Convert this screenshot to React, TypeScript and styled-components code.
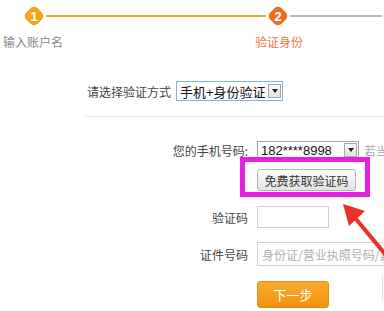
import React from 'react';
import styled, { createGlobalStyle } from 'styled-components';

const GlobalStyle = createGlobalStyle`
    html, body {
        margin: 0;
        padding: 0;
        background: #ffffff;
    }
    body {
        font-family: "Noto Sans CJK SC", "Noto Sans", sans-serif;
        font-size: 12px;
        color: #333;
    }
`;

const Page = styled.div`
    position: relative;
    width: 384px;
    height: 311px;
    overflow: hidden;
`;

// ---- step header ----

const Steps = styled.div`
    padding-top: 6px;
`;

const Track = styled.div`
    display: flex;
    align-items: center;
    padding-left: 24px;
    height: 20px;
`;

interface NodeProps {
    $color: string
}

const Node = styled.div<NodeProps>`
    position: relative;
    width: 20px;
    height: 20px;
    flex: none;
    display: flex;
    align-items: center;
    justify-content: center;
    color: #fff;
    font-family: "Liberation Sans", Arial, sans-serif;
    font-weight: bold;
    font-size: 13px;

    &::before {
        content: "";
        position: absolute;
        left: 2px;
        top: 2px;
        width: 16px;
        height: 16px;
        background: ${(props) => props.$color};
        border-radius: 5px;
        transform: rotate(45deg);
    }

    span {
        position: relative;
    }
`;

interface LineProps {
    $color: string
    $width?: number
}

const Line = styled.div<LineProps>`
    height: 2px;
    background: ${(props) => props.$color};
    margin: 0 2px;
    ${(props) => props.$width ? `width: ${props.$width}px; flex: none;` : 'flex: 1;'}
`;

const Labels = styled.div`
    display: flex;
    margin-top: 8px;
    line-height: 16px;
`;

interface StepLabelProps {
    $color: string
    $left: number
}

const StepLabel = styled.span<StepLabelProps>`
    color: ${(props) => props.$color};
    margin-left: ${(props) => props.$left}px;
    font-size: 12px;
`;

// ---- method select ----

const MethodRow = styled.div`
    display: flex;
    align-items: center;
    gap: 5px;
    margin-top: 30px;
    padding-left: 87px;
    height: 22px;
    font-size: 12px;
    color: #444;
`;

interface SelectProps {
    $border: string
    $width: number
    $height: number
}

const Select = styled.div<SelectProps>`
    display: flex;
    align-items: center;
    width: ${(props) => props.$width}px;
    height: ${(props) => props.$height}px;
    border: 1px solid ${(props) => props.$border};
    box-sizing: border-box;
    padding: 0 1px 0 3px;
    font-size: 13px;
    color: #111;
    background: #fff;
    white-space: nowrap;
`;

const SelectText = styled.span`
    flex: 1;
    font-family: "Liberation Sans", "Noto Sans CJK SC", sans-serif;
`;

const Caret = styled.span`
    width: 13px;
    height: 14px;
    box-sizing: border-box;
    border: 1px solid #a8a8a8;
    background: linear-gradient(#fafafa, #e2e2e2);
    display: flex;
    align-items: center;
    justify-content: center;

    &::after {
        content: "";
        border-left: 3px solid transparent;
        border-right: 3px solid transparent;
        border-top: 4px solid #222;
    }
`;

const Divider = styled.div`
    height: 1px;
    background: #e6e6e6;
    margin: 14px 0 0 85px;
`;

// ---- form ----

const Form = styled.div`
    display: flex;
    flex-direction: column;
`;

interface RowProps {
    $top: number
    $height: number
}

const Row = styled.div<RowProps>`
    display: grid;
    grid-template-columns: 248px auto;
    column-gap: 9px;
    align-items: center;
    margin-top: ${(props) => props.$top}px;
    height: ${(props) => props.$height}px;
`;

const Label = styled.span`
    text-align: right;
    font-size: 12px;
    color: #444;
    white-space: nowrap;
`;

const Controls = styled.div`
    display: flex;
    align-items: center;
    gap: 5px;
    white-space: nowrap;
`;

const Hint = styled.span`
    color: #aaa;
    font-size: 12px;
`;

const Anchor = styled.div`
    position: relative;
    display: inline-flex;
`;

const Highlight = styled.div`
    position: absolute;
    left: -17px;
    top: -12px;
    width: 130px;
    height: 40px;
    box-sizing: border-box;
    border: 5px solid #e61ee6;
    pointer-events: none;
`;

const GrayButton = styled.button`
    width: 99px;
    height: 22px;
    padding: 0;
    border: 1px solid #b5b5b5;
    border-radius: 3px;
    background: linear-gradient(#fdfdfd, #e3e3e3);
    font-family: "Noto Sans CJK SC", sans-serif;
    font-size: 12px;
    color: #333;
`;

interface InputProps {
    $width: number
    $height: number
}

const Input = styled.input<InputProps>`
    width: ${(props) => props.$width}px;
    height: ${(props) => props.$height}px;
    box-sizing: border-box;
    border: 1px solid #d0d0d0;
    padding: 0 4px;
    font-family: "Noto Sans CJK SC", sans-serif;
    font-size: 12px;
    outline: none;

    &::placeholder {
        color: #b0b0b0;
    }
`;

const NextButton = styled.button`
    width: 72px;
    height: 27px;
    padding: 0;
    border: 1px solid #e58f0c;
    border-radius: 3px;
    background: linear-gradient(#f8ad31, #f0920f);
    color: #fff;
    font-family: "Noto Sans CJK SC", sans-serif;
    font-size: 13px;
`;

const Arrow = styled.svg`
    position: absolute;
    left: 335px;
    top: 198px;
`;

const EdgeMark = styled.div`
    position: absolute;
    left: 382px;
    top: 276px;
    width: 1px;
    height: 24px;
    background: #ddd;
`;

const App = () => {
    return (
        <Page>
            <GlobalStyle />
            <Steps>
                <Track>
                    <Node $color="#f6a21e"><span>1</span></Node>
                    <Line $color="#f0a632" $width={220} />
                    <Node $color="#ee6b23"><span>2</span></Node>
                    <Line $color="#b8b8b8" />
                </Track>
                <Labels>
                    <StepLabel $color="#888" $left={3}>输入账户名</StepLabel>
                    <StepLabel $color="#e9773a" $left={192}>验证身份</StepLabel>
                </Labels>
            </Steps>

            <MethodRow>
                <span>请选择验证方式</span>
                <Select $border="#7fb2e5" $width={107} $height={20}>
                    <SelectText>手机+身份验证</SelectText>
                    <Caret />
                </Select>
            </MethodRow>
            <Divider />

            <Form>
                <Row $top={24} $height={18}>
                    <Label>您的手机号码:</Label>
                    <Controls>
                        <Select $border="#a5a5a5" $width={102} $height={18}>
                            <SelectText>182****8998</SelectText>
                            <Caret />
                        </Select>
                        <Hint>若当前手机号码已不可用</Hint>
                    </Controls>
                </Row>
                <Row $top={10} $height={22}>
                    <span />
                    <Controls>
                        <Anchor>
                            <GrayButton>免费获取验证码</GrayButton>
                            <Highlight />
                        </Anchor>
                    </Controls>
                </Row>
                <Row $top={15} $height={22}>
                    <Label>验证码</Label>
                    <Controls>
                        <Input $width={72} $height={22} />
                    </Controls>
                </Row>
                <Row $top={14} $height={24}>
                    <Label>证件号码</Label>
                    <Controls>
                        <Input $width={160} $height={24} placeholder="身份证/营业执照号码/其他证件号码" />
                    </Controls>
                </Row>
                <Row $top={15} $height={27}>
                    <span />
                    <Controls>
                        <NextButton>下一步</NextButton>
                    </Controls>
                </Row>
            </Form>

            <Arrow width="60" height="80" viewBox="0 0 60 80">
                <line x1="60" y1="68" x2="16" y2="15" stroke="#e8302c" strokeWidth="4" strokeLinecap="round" />
                <polygon points="8,6 30,13 14,28" fill="#e8302c" />
            </Arrow>
            <EdgeMark />
        </Page>
    );
};

export default App;
